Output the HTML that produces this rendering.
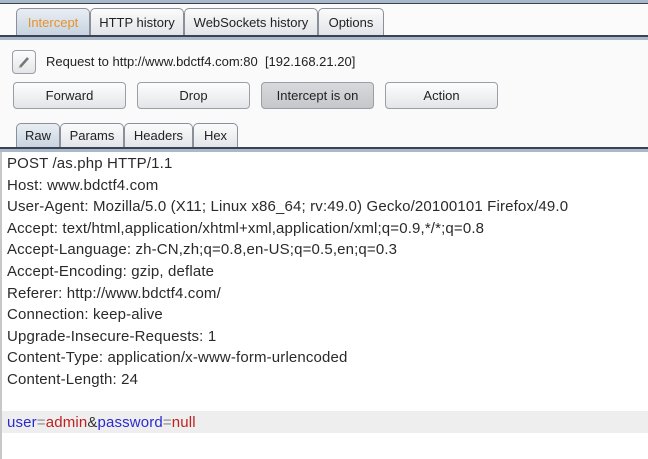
<!DOCTYPE html>
<html><head><style>
body{margin:0;width:648px;height:459px;background:#fff;font-family:"Liberation Sans",sans-serif;overflow:hidden;position:relative}
.abs{position:absolute}
.line{position:absolute;left:0;width:648px}
.tab{position:absolute;top:8px;height:27px;border:1px solid #8a8f99;border-bottom:none;border-radius:5px 5px 0 0;background:linear-gradient(#fbfbfb,#e2e4e8);font-size:13px;color:#222;text-align:center;line-height:27px;box-sizing:border-box}
.btn{position:absolute;top:82px;height:27px;border:1px solid #9a9ea6;border-radius:4px;background:linear-gradient(#fdfdfd,#e4e5e8);font-size:13px;color:#222;text-align:center;line-height:26px;box-sizing:border-box;width:113px}
.stab{position:absolute;top:123px;height:25px;border:1px solid #8a8f99;border-bottom:none;border-radius:5px 5px 0 0;background:linear-gradient(#fbfbfb,#e2e4e8);font-size:13px;color:#222;text-align:center;line-height:24px;box-sizing:border-box}
.txt{position:absolute;left:7px;font-size:15px;letter-spacing:0.15px;color:#2a2a2a;line-height:21.6px;white-space:pre}
</style></head><body>
<div class="line" style="top:0;height:3px;background:#a9b9cc;border-bottom:1px solid #3c4350"></div>
<div class="abs" style="left:0;top:4px;width:648px;height:31px;background:#fbfbfb"></div>
<div class="tab" style="left:16px;width:74px;background:linear-gradient(#e9eef3,#c6d3e0);color:#e8912a">Intercept</div>
<div class="tab" style="left:90px;width:94px">HTTP history</div>
<div class="tab" style="left:184px;width:134px">WebSockets history</div>
<div class="tab" style="left:318px;width:66px">Options</div>
<div class="line" style="top:35px;height:2px;background:#3c4350"></div>
<div class="line" style="top:37px;height:3px;background:#a9b9cc"></div>
<div class="abs" style="left:0;top:40px;width:648px;height:107px;background:#fafafa"></div>
<div class="abs" style="left:12px;top:50px;width:24px;height:24px;border:1px solid #9a9ea6;border-radius:4px;background:linear-gradient(#fdfdfd,#e4e5e8);box-sizing:border-box">
<svg width="22" height="22" viewBox="0 0 22 22"><path d="M7 16 L15 7" stroke="#777" stroke-width="2.5"/><path d="M6 17 L7 15" stroke="#aaa" stroke-width="1"/></svg></div>
<div class="abs" style="left:46px;top:54px;font-size:13px;color:#222">Request to http://www.bdctf4.com:80&nbsp;&nbsp;[192.168.21.20]</div>
<div class="btn" style="left:13px">Forward</div>
<div class="btn" style="left:137px">Drop</div>
<div class="btn" style="left:261px;background:linear-gradient(#d8d9dc,#c6c7cb)">Intercept is on</div>
<div class="btn" style="left:385px">Action</div>
<div class="stab" style="left:16px;width:44px;background:linear-gradient(#e9eef3,#c6d3e0)">Raw</div>
<div class="stab" style="left:60px;width:64px">Params</div>
<div class="stab" style="left:124px;width:69px">Headers</div>
<div class="stab" style="left:193px;width:45px">Hex</div>
<div class="line" style="top:147px;height:2px;background:#3c4350"></div>
<div class="line" style="top:149px;height:3px;background:#a9b9cc"></div>
<div class="abs" style="left:0;top:152px;width:2px;height:307px;background:#c8c8c8"></div>
<div class="abs" style="left:2px;top:411px;width:646px;height:22px;background:#eeeeee"></div>
<div class="txt" style="top:153px">POST /as.php HTTP/1.1
Host: www.bdctf4.com
User-Agent: Mozilla/5.0 (X11; Linux x86_64; rv:49.0) Gecko/20100101 Firefox/49.0
Accept: text/html,application/xhtml+xml,application/xml;q=0.9,*/*;q=0.8
Accept-Language: zh-CN,zh;q=0.8,en-US;q=0.5,en;q=0.3
Accept-Encoding: gzip, deflate
Referer: http://www.bdctf4.com/
Connection: keep-alive
Upgrade-Insecure-Requests: 1
Content-Type: application/x-www-form-urlencoded
Content-Length: 24</div>
<div class="txt" style="top:412px"><span style="color:#2a2ad0">user</span><span style="color:#888">=</span><span style="color:#c02020">admin</span><span style="color:#333">&amp;</span><span style="color:#2a2ad0">password</span><span style="color:#888">=</span><span style="color:#c02020">null</span></div>
</body></html>
